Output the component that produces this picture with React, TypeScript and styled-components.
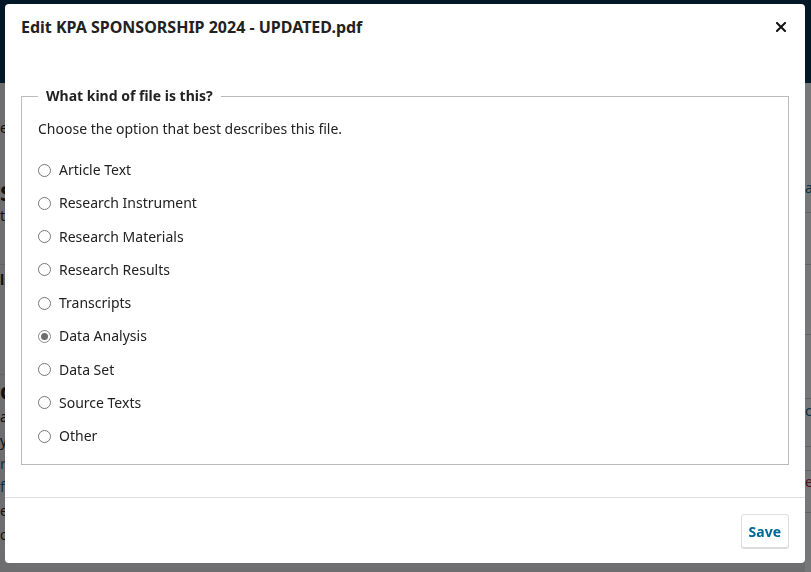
import React from "react";
import styled, { createGlobalStyle } from "styled-components";

const GlobalStyle = createGlobalStyle`
  html, body { margin: 0; padding: 0; }
  body {
    font-family: "Noto Sans", "Open Sans", sans-serif;
    width: 811px;
    height: 572px;
    overflow: hidden;
    background: #dcdde2;
  }
  * { box-sizing: border-box; }
`;

const Page = styled.div`
  width: 811px;
  height: 572px;
  display: flex;
  flex-direction: column;
  background: #dcdde2;
`;

const TopBar = styled.div`
  height: 83px;
  background: #04304f;
  flex: none;
`;

const PageBody = styled.div`
  flex: 1;
  display: flex;
  justify-content: space-between;
`;

const SideCol = styled.div<{ $align: "left" | "right" }>`
  width: ${(p) => (p.$align === "left" ? "40px" : "6px")};
  display: flex;
  flex-direction: column;
  overflow: hidden;
  ${(p) => (p.$align === "right" ? "background: #eceef0;" : "")}
`;

const Frag = styled.div<{ $h: number; $size: number; $color: string; $bold?: boolean; $line?: boolean }>`
  height: ${(p) => p.$h}px;
  font-size: ${(p) => p.$size}px;
  line-height: ${(p) => p.$h}px;
  color: ${(p) => p.$color};
  font-weight: ${(p) => (p.$bold ? 700 : 400)};
  white-space: nowrap;
  ${(p) => (p.$line ? "border-bottom: 1px solid #c4c6ca;" : "")}
`;

const Overlay = styled.div`
  position: fixed;
  inset: 0;
  background: rgba(0, 0, 0, 0.5);
  padding: 4px 6px 9px 5px;
  display: flex;
`;

const Modal = styled.div`
  flex: 1;
  background: #fff;
  border-radius: 4px;
  display: flex;
  flex-direction: column;
  color: #222;
`;

const Header = styled.div`
  display: flex;
  align-items: center;
  justify-content: space-between;
  padding: 0 19px 0 16px;
  height: 48px;
`;

const Title = styled.h1`
  margin: 0;
  font-size: 16px;
  line-height: 24px;
  font-weight: 700;
  color: #222;
`;

const CloseButton = styled.button`
  border: 0;
  background: none;
  padding: 0;
  width: 10px;
  height: 10px;
  display: flex;
  color: #111;
  cursor: pointer;
`;

const Body = styled.div`
  flex: 1;
  padding: 36px 16px 32px;
`;

const Fieldset = styled.fieldset`
  margin: 0;
  border: 1px solid #bbb;
  border-radius: 0;
  padding: 0 16px 18px;
  min-width: 0;
`;

const Legend = styled.legend`
  padding: 0 8px;
  font-size: 14px;
  line-height: 20px;
  font-weight: 700;
  color: #222;
`;

const Description = styled.p`
  margin: 13px 0 21px;
  font-size: 14px;
  line-height: 20px;
  color: #222;
`;

const Options = styled.div`
  display: flex;
  flex-direction: column;
  gap: 13.25px;
`;

const OptionLabel = styled.label`
  display: flex;
  align-items: center;
  gap: 8px;
  font-size: 14px;
  line-height: 20px;
  height: 20px;
  color: #222;
  cursor: pointer;
`;

const Radio = styled.input.attrs({ type: "radio" })`
  appearance: none;
  margin: 0;
  width: 13px;
  height: 13px;
  border: 1px solid #767676;
  border-radius: 50%;
  background: #fff;
  flex: none;
  position: relative;

  &:checked {
    border-color: #8a8a8a;
  }
  &:checked::after {
    content: "";
    position: absolute;
    inset: 2px;
    border-radius: 50%;
    background: #6f6f6f;
  }
`;

const Footer = styled.div`
  border-top: 1px solid #ddd;
  padding: 16px 16px 15px;
  display: flex;
  justify-content: flex-end;
`;

const SaveButton = styled.button`
  height: 34px;
  padding: 0 7px;
  font-family: inherit;
  font-size: 14px;
  font-weight: 700;
  color: #006798;
  background: #fff;
  border: 1px solid #ddd;
  border-radius: 3px;
  box-shadow: 0 1px 0 #ddd;
  cursor: pointer;
`;

const options = [
  "Article Text",
  "Research Instrument",
  "Research Materials",
  "Research Results",
  "Transcripts",
  "Data Analysis",
  "Data Set",
  "Source Texts",
  "Other",
];

const leftFrags = [
  { h: 34, size: 14, color: "#222", text: "" },
  { h: 22, size: 14, color: "#222", text: "e" },
  { h: 40, size: 14, color: "#222", text: "" },
  { h: 26, size: 22, color: "#222", text: "S", bold: true },
  { h: 22, size: 14, color: "#222", text: "t" },
  { h: 38, size: 14, color: "#222", text: "", line: true },
  { h: 30, size: 14, color: "#222", text: "ls", bold: true },
  { h: 80, size: 14, color: "#222", text: "", line: true },
  { h: 30, size: 22, color: "#222", text: "d", bold: true },
  { h: 24, size: 14, color: "#222", text: "a" },
  { h: 24, size: 14, color: "#222", text: "y" },
  { h: 22, size: 14, color: "#006798", text: "r" },
  { h: 24, size: 14, color: "#006798", text: "f" },
  { h: 24, size: 14, color: "#222", text: "e" },
  { h: 24, size: 14, color: "#222", text: "o" },
];

const rightFrags = [
  { h: 94, size: 14, color: "#222", text: "" },
  { h: 22, size: 14, color: "#006798", text: "a" },
  { h: 14, size: 14, color: "#222", text: "", line: true },
  { h: 52, size: 14, color: "#222", text: "", line: true },
  { h: 70, size: 14, color: "#222", text: "", line: true },
  { h: 64, size: 14, color: "#222", text: "", line: true },
  { h: 24, size: 14, color: "#006798", text: "c" },
  { h: 24, size: 14, color: "#222", text: "", line: true },
  { h: 24, size: 14, color: "#222", text: "", line: true },
  { h: 22, size: 14, color: "#9a1d45", text: "e" },
  { h: 20, size: 14, color: "#222", text: "", line: true },
];

export default function App() {
  const [value, setValue] = React.useState("Data Analysis");
  return (
    <>
      <GlobalStyle />
      <Page>
        <TopBar />
        <PageBody>
          <SideCol $align="left">
            {leftFrags.map((f, i) => (
              <Frag key={i} $h={f.h} $size={f.size} $color={f.color} $bold={f.bold} $line={f.line}>
                {f.text}
              </Frag>
            ))}
          </SideCol>
          <SideCol $align="right">
            {rightFrags.map((f, i) => (
              <Frag key={i} $h={f.h} $size={f.size} $color={f.color} $line={f.line}>
                {f.text}
              </Frag>
            ))}
          </SideCol>
        </PageBody>
      </Page>
      <Overlay>
        <Modal role="dialog" aria-modal="true">
          <Header>
            <Title>Edit KPA SPONSORSHIP 2024 - UPDATED.pdf</Title>
            <CloseButton aria-label="Close">
              <svg width="10" height="10" viewBox="0 0 10 10">
                <path d="M1 1 L9 9 M9 1 L1 9" stroke="currentColor" strokeWidth="2" strokeLinecap="square" />
              </svg>
            </CloseButton>
          </Header>
          <Body>
            <Fieldset>
              <Legend>What kind of file is this?</Legend>
              <Description>Choose the option that best describes this file.</Description>
              <Options>
                {options.map((o) => (
                  <OptionLabel key={o}>
                    <Radio name="genre" checked={value === o} onChange={() => setValue(o)} />
                    {o}
                  </OptionLabel>
                ))}
              </Options>
            </Fieldset>
          </Body>
          <Footer>
            <SaveButton>Save</SaveButton>
          </Footer>
        </Modal>
      </Overlay>
    </>
  );
}
